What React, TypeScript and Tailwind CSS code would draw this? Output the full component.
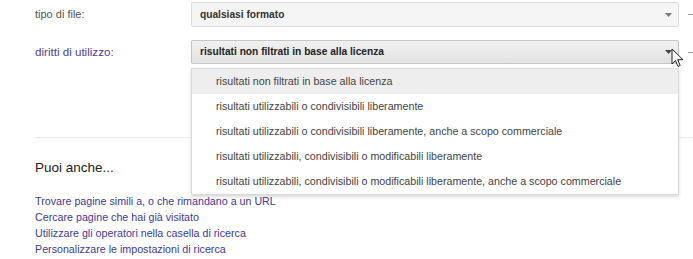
const options = [
  "risultati non filtrati in base alla licenza",
  "risultati utilizzabili o condivisibili liberamente",
  "risultati utilizzabili o condivisibili liberamente, anche a scopo commerciale",
  "risultati utilizzabili, condivisibili o modificabili liberamente",
  "risultati utilizzabili, condivisibili o modificabili liberamente, anche a scopo commerciale",
]

const links = [
  "Trovare pagine simili a, o che rimandano a un URL",
  "Cercare pagine che hai già visitato",
  "Utilizzare gli operatori nella casella di ricerca",
  "Personalizzare le impostazioni di ricerca",
]

function Arrow({ dark }: { dark?: boolean }) {
  return (
    <svg width="7" height="4" viewBox="0 0 7 4" className="shrink-0">
      <path d="M0 0h7L3.5 4z" fill={dark ? "#444" : "#777"} />
    </svg>
  )
}

export default function App() {
  return (
    <div className="relative h-[259px] w-[693px] overflow-hidden bg-white font-['Liberation_Sans',Arial,sans-serif]">
      {/* tipo di file */}
      <div className="mt-[2px] flex h-[25px] items-center">
        <div className="w-[191px] pl-[35px] text-[11px] text-[#555]">tipo di file:</div>
        <div className="flex h-full w-[488px] items-center justify-between rounded-[2px] border border-[#dcdcdc] bg-[#f5f5f5] pl-[8px] pr-[6px]">
          <span className="text-[10.2px] font-bold text-[#333]">qualsiasi formato</span>
          <Arrow />
        </div>
        <div className="ml-[9px] h-px w-[5px] bg-[#999]" />
      </div>

      {/* diritti di utilizzo */}
      <div className="mt-[13px] flex h-[24px] items-center">
        <div className="w-[191px] pl-[35px] text-[11.6px] text-[#4a3f9e]">diritti di utilizzo:</div>
        <div className="flex h-full w-[488px] items-center justify-between rounded-[2px] border border-[#c6c6c6] bg-gradient-to-b from-[#f1f1f1] to-[#e3e3e3] pl-[8px] pr-[6px]">
          <span className="text-[10.2px] font-bold text-[#222]">risultati non filtrati in base alla licenza</span>
          <Arrow dark />
        </div>
        <div className="ml-[9px] h-px w-[5px] bg-[#999]" />
      </div>

      <div className="mt-[73px] ml-[35px] h-px bg-[#ebebeb]" />

      <div className="mt-[20px] pl-[35px] text-[13.5px] leading-[20px] text-[#222]">Puoi anche...</div>

      <div className="mt-[15px] flex flex-col pl-[35px]">
        {links.map((l) => (
          <a key={l} className="text-[10.7px] leading-[16px] text-[#3f3a9c]">
            {l}
          </a>
        ))}
      </div>

      {/* dropdown menu */}
      <div className="absolute left-[191px] top-[68px] w-[488px] border border-[#dadada] bg-white shadow-[0_2px_3px_rgba(0,0,0,0.15)]">
        {options.map((o, i) => (
          <div
            key={o}
            className={`flex h-[25px] items-center pl-[24px] text-[10.7px] text-[#444] ${i === 0 ? "bg-[#eeeeee]" : ""}`}
          >
            {o}
          </div>
        ))}
      </div>

      {/* mouse cursor */}
      <svg className="absolute left-[671px] top-[48px]" width="13" height="20" viewBox="0 0 13 20">
        <path d="M1 1v15l3.5-3.5 2.5 6 2.2-1-2.5-5.8H12z" fill="#fff" stroke="#222" strokeWidth="1" strokeLinejoin="round" />
      </svg>
    </div>
  )
}
